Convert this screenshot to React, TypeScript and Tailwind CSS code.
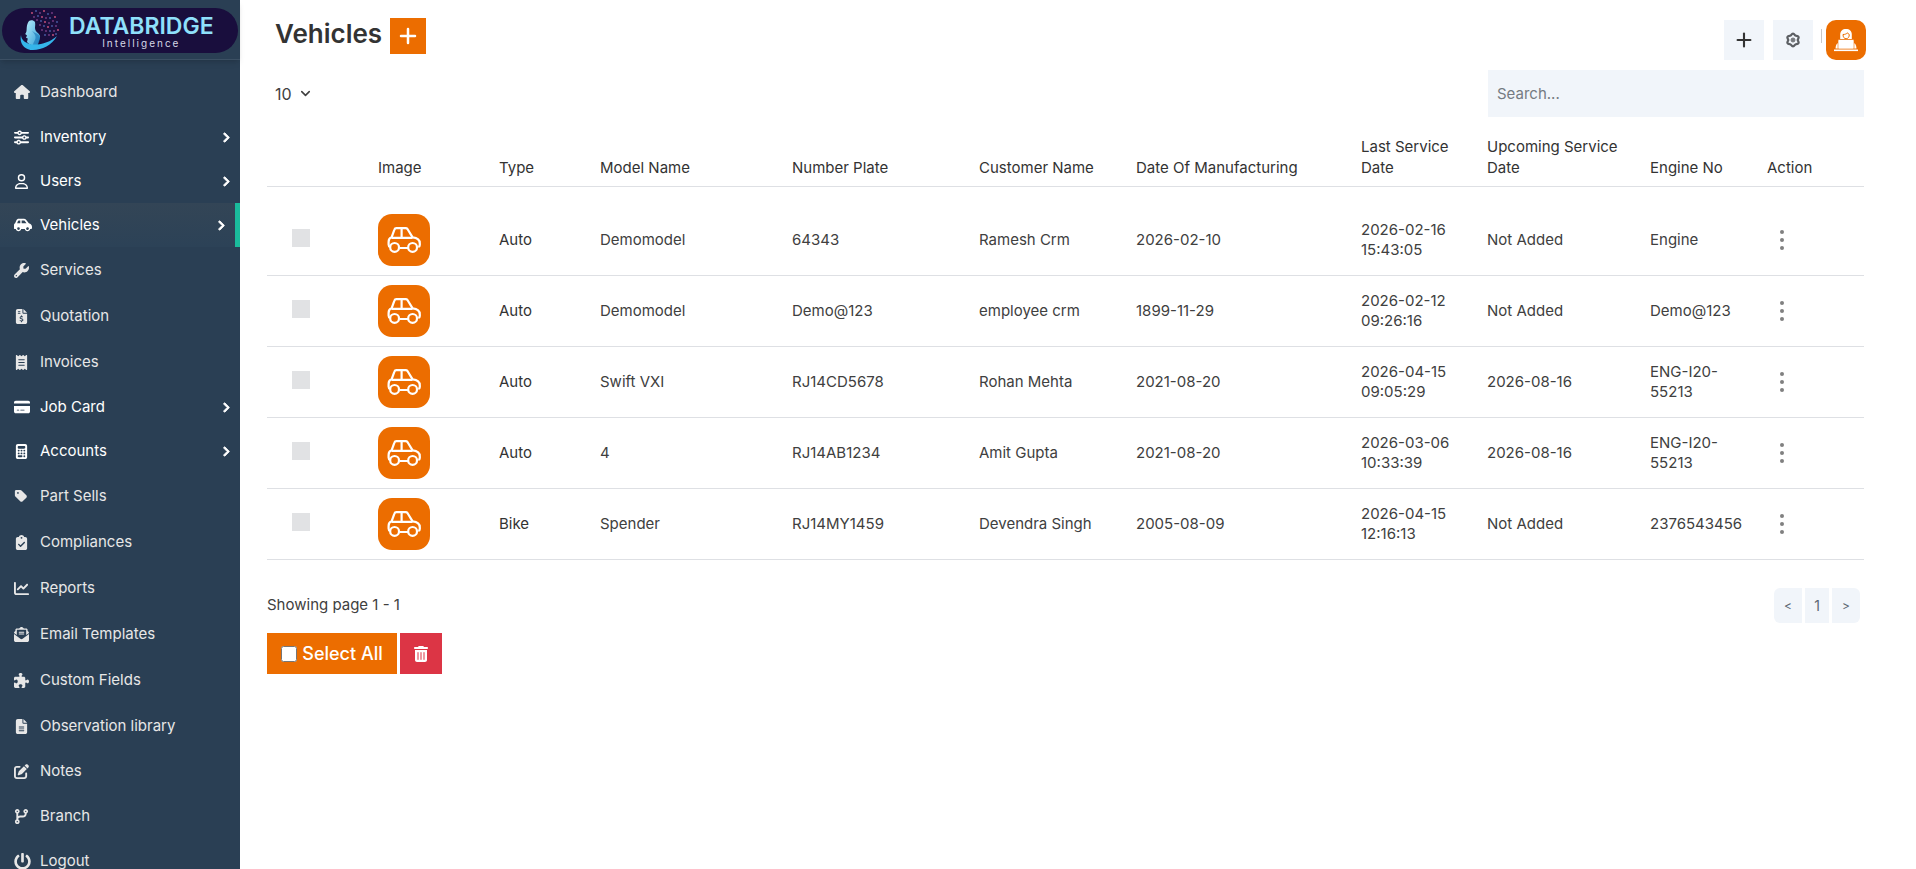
import type { ReactNode } from "react";
import {
  FaHouse, FaSliders, FaRegUser, FaCarSide, FaWrench, FaFileInvoiceDollar, FaReceipt, FaCreditCard,
  FaCalculator, FaTag, FaClipboardCheck, FaChartLine, FaEnvelopeOpenText, FaPuzzlePiece, FaFileLines,
  FaPenToSquare, FaCodeBranch, FaTrashCan,
} from "react-icons/fa6";
import { FaChevronRight, FaPowerOff } from "react-icons/fa";
import { ChevronDown, Plus } from "lucide-react";

type NavItem = { label: string; icon: ReactNode; sub?: boolean; active?: boolean };

const MAIN_NAV: NavItem[] = [
  { label: "Dashboard", icon: <FaHouse size={16} /> },
  { label: "Inventory", icon: <FaSliders size={15} />, sub: true },
  { label: "Users", icon: <FaRegUser size={15} />, sub: true },
  { label: "Vehicles", icon: <FaCarSide size={18} />, sub: true, active: true },
  { label: "Services", icon: <FaWrench size={15} /> },
  { label: "Quotation", icon: <FaFileInvoiceDollar size={15} /> },
  { label: "Invoices", icon: <FaReceipt size={15} /> },
  { label: "Job Card", icon: <FaCreditCard size={16} />, sub: true },
  { label: "Accounts", icon: <FaCalculator size={15} />, sub: true },
  { label: "Part Sells", icon: <FaTag size={14} /> },
  { label: "Compliances", icon: <FaClipboardCheck size={15} /> },
  { label: "Reports", icon: <FaChartLine size={15} /> },
  { label: "Email Templates", icon: <FaEnvelopeOpenText size={15} /> },
  { label: "Custom Fields", icon: <FaPuzzlePiece size={15} /> },
  { label: "Observation library", icon: <FaFileLines size={15} /> },
];

const MORE_NAV: NavItem[] = [
  { label: "Notes", icon: <FaPenToSquare size={15} /> },
  { label: "Branch", icon: <FaCodeBranch size={15} /> },
  { label: "Logout", icon: <FaPowerOff size={17} /> },
];

const COLUMNS = [
  { label: "", width: "w-[111px]" },
  { label: "Image", width: "w-[121px]" },
  { label: "Type", width: "w-[101px]" },
  { label: "Model Name", width: "w-[192px]" },
  { label: "Number Plate", width: "w-[187px]" },
  { label: "Customer Name", width: "w-[157px]" },
  { label: "Date Of Manufacturing", width: "w-[225px]" },
  { label: "Last Service Date", width: "w-[126px]" },
  { label: "Upcoming Service Date", width: "w-[163px]" },
  { label: "Engine No", width: "w-[117px]" },
  { label: "Action", width: "w-[97px]" },
];

const ROWS = [
  ["Auto", "Demomodel", "64343", "Ramesh Crm", "2026-02-10", "2026-02-16 15:43:05", "Not Added", "Engine"],
  ["Auto", "Demomodel", "Demo@123", "employee crm", "1899-11-29", "2026-02-12 09:26:16", "Not Added", "Demo@123"],
  ["Auto", "Swift VXI", "RJ14CD5678", "Rohan Mehta", "2021-08-20", "2026-04-15 09:05:29", "2026-08-16", "ENG-I20-55213"],
  ["Auto", "4", "RJ14AB1234", "Amit Gupta", "2021-08-20", "2026-03-06 10:33:39", "2026-08-16", "ENG-I20-55213"],
  ["Bike", "Spender", "RJ14MY1459", "Devendra Singh", "2005-08-09", "2026-04-15 12:16:13", "Not Added", "2376543456"],
];

const DOTS: [number, number, number][] = [
  [12, 3, 0], [16, 1, 1], [20, 3, 2], [24, 1, 0], [28, 4, 1], [32, 3, 2], [35, 7, 0], [14, 7, 2], [18, 6, 1],
  [22, 7, 0], [26, 8, 2], [30, 8, 1], [33, 11, 2], [37, 12, 1], [17, 10, 2], [21, 11, 1], [25, 12, 0],
  [29, 13, 2], [20, 15, 2], [24, 16, 1], [28, 17, 0], [32, 16, 1], [36, 16, 2], [38, 20, 0], [22, 20, 2],
  [26, 21, 2], [30, 21, 1], [34, 21, 2], [25, 25, 1], [29, 25, 2], [33, 25, 0], [36, 24, 1],
];
const DOT_FILLS = ["#d2557f", "#4a5fa8", "#7a3f86"];

function LogoMark() {
  return (
    <svg viewBox="0 0 40 42" className="h-[42px] w-10 shrink-0" aria-hidden="true">
      <defs>
        <linearGradient id="face" x1="0" y1="0" x2="1" y2="1">
          <stop offset="0" stopColor="#b9ecfb" />
          <stop offset="1" stopColor="#2f9fd6" />
        </linearGradient>
      </defs>
      {DOTS.map(([x, y, c]) => (
        <circle key={`${x}-${y}`} cx={x} cy={y} r={0.9} fill={DOT_FILLS[c]} />
      ))}
      <path
        d="M9 11c2-1.500 4.500-1 6 1 .8 3-.6 5.500.4 8 1.200 3 5.500 4 4.600 7.500-.6 2.500-2 5-2.500 8.500-4 .5-8-1-10.500-4l.8-3.500-1.800-.8 1-2.200-1.800-1.500c1.600-2 1.300-3.500 1.500-6 .2-2.500.8-5.500 2.300-7z"
        fill="url(#face)"
      />
      <path d="M12 21c2 2 4 4 3.500 7-.4 3-2.500 4-2.500 8l5 .5c0-4 2.500-6 2-9-.6-3-4-4-8-6.500z" fill="#1673b5" opacity=".6" />
      <path d="M1 25c0 5 5 9 12 9.500 9 .5 17-2.500 24-8.500-5 9-15 14-24 14C5 40-1 34 1 25z" fill="#35b5ea" />
    </svg>
  );
}

function CarIcon() {
  return (
    <svg viewBox="0 0 52 52" className="size-[52px]" fill="none" stroke="#fff" strokeWidth="2.200" strokeLinejoin="round" role="img" aria-label="Vehicle">
      <rect width="52" height="52" rx="14" fill="#ec6d00" stroke="none" />
      <path d="M12 33c-1-.6-1.400-1.300-1.400-2.500V28c0-2.500 1-4.200 3-4.700l2.800-7.700c.3-.9 1-1.400 2-1.400h9.200c.9 0 1.500.3 2 1l5 8.200c4.300.4 7.200 2.400 7.200 6v1.600c0 1-.5 1.700-1.500 2M21.500 34h8.500" />
      <path d="M13.500 23.800h21M23.600 14.500v9" />
      <circle cx="16.600" cy="33.400" r="4.400" />
      <circle cx="34.600" cy="33.400" r="4.400" />
    </svg>
  );
}

function AvatarIcon() {
  return (
    <svg viewBox="0 0 40 40" className="size-10" aria-hidden="true">
      <rect width="40" height="40" rx="10" fill="#ec6d00" />
      <path d="M14.200 19v-4.500C14.200 11 16.500 9 20 9s5.800 2 5.800 5.500V19z" fill="#fff" />
      <path d="M17 14.500c2 0 3.500-.6 4.500-1.700.4.900 1 1.400 1.800 1.700 0 2.500-1.200 4.200-3.200 4.200S17 17 17 14.500z" fill="#fff" stroke="#ec6d00" />
      <path d="M12 23c-1.500.7-2.200 2.200-2.500 5.500h21c-.3-3.300-1-4.800-2.500-5.500z" fill="#fff" />
      <rect x="12" y="19.500" width="16" height="9.500" rx="1" fill="#fff" stroke="#ec6d00" strokeWidth=".6" />
      <rect x="8" y="29.500" width="24" height="1.600" fill="#fff" />
    </svg>
  );
}

function GearIcon() {
  return (
    <svg viewBox="0 0 16 16" className="size-4" fill="none" stroke="#5c5f63" aria-hidden="true">
      <path
        d="M8 1.700C9.500 1.700 9.600 3.100 10.500 3.600S12.700 3.500 13.500 4.800 12.700 7 12.700 8s1.600 1.900.8 3.200-2.100.7-3 1.200-1 1.900-2.500 1.900-1.600-1.400-2.500-1.900-2.200.1-3-1.200S3.300 9 3.300 8 1.700 6.100 2.500 4.800s2.100-.7 3-1.200S6.500 1.700 8 1.700z"
        strokeWidth="2.200"
        strokeLinejoin="round"
      />
      <circle cx="8" cy="8" r="2" fill="#77797d" stroke="#77797d" />
    </svg>
  );
}

function NavList({ items, rowClass }: { items: NavItem[]; rowClass: string }) {
  return (
    <ul>
      {items.map((item) => (
        <li key={item.label}>
          <a
            href="#"
            className={
              item.active
                ? "flex h-11 items-center border-r-[5px] border-[#1abb9c] bg-linear-to-b from-[#334556] to-[#2c4257] pr-2 pl-[14px] text-white"
                : item.sub
                  ? "flex h-11 items-center pr-2 pl-[14px] text-white"
                  : `flex items-center px-[14px] text-[#e7e7e7] ${rowClass}`
            }
          >
            <span className="flex w-[26px] shrink-0">{item.icon}</span>
            <span className="grow">{item.label}</span>
            {item.sub && <FaChevronRight size={11} stroke="currentColor" strokeWidth={40} />}
          </a>
        </li>
      ))}
    </ul>
  );
}

export default function App() {
  return (
    <div className="flex min-h-screen bg-white font-['Inter',sans-serif] text-[15px] text-[#404040]">
      <aside className="sticky top-0 flex h-screen w-60 shrink-0 flex-col bg-[#2a3f54]">
        <div className="h-[60px] shrink-0 border-b border-[#3c5064] px-[2px] pt-2 shadow-md">
          <div className="flex h-[45px] items-center rounded-full bg-[#190e3d] pl-[18px]">
            <LogoMark />
            <div className="ml-[9px] flex flex-col items-center pt-[2px]">
              <span className="text-[23px] leading-[22px] font-semibold text-[#8fe0fb]">DATABRIDGE</span>
              <span className="text-[10px] leading-3 tracking-[2px] text-[#d5d7e6]">Intelligence</span>
            </div>
          </div>
        </div>
        <nav className="min-h-0 grow overflow-y-auto pt-[9px] [scrollbar-width:none]" aria-label="Main">
          <NavList items={MAIN_NAV} rowClass="h-[46px]" />
          <NavList items={MORE_NAV} rowClass="h-[45px]" />
        </nav>
      </aside>

      <main className="min-w-0 grow pr-[52px] pl-[27px]">
        <header className="flex h-[70px] items-start justify-between pl-2">
          <div className="flex items-start gap-2 pt-[18px]">
            <h1 className="text-[26px] leading-8 font-semibold text-[#333]">Vehicles</h1>
            <button type="button" aria-label="Add vehicle" className="flex size-9 items-center justify-center bg-[#ec6d00] text-white">
              <Plus size={24} strokeWidth={2.5} />
            </button>
          </div>
          <div className="-mr-[2px] flex pt-5">
            <button type="button" aria-label="Quick add" className="flex size-10 items-center justify-center bg-[#f1f5fa] text-[#333]">
              <Plus size={22} strokeWidth={2.3} />
            </button>
            <button type="button" aria-label="Settings" className="ml-[9px] flex size-10 items-center justify-center bg-[#f1f5fa]">
              <GearIcon />
            </button>
            <span className="mt-[9px] ml-2 h-[14px] w-px bg-[#c8c8c8]" />
            <button type="button" aria-label="Account" className="ml-1">
              <AvatarIcon />
            </button>
          </div>
        </header>

        <div className="flex items-center justify-between">
          <label className="grid items-center pl-2 text-base">
            <select aria-label="Rows per page" defaultValue="10" className="col-start-1 row-start-1 w-[38px] appearance-none bg-transparent">
              <option>10</option>
              <option>25</option>
              <option>50</option>
            </select>
            <ChevronDown size={15} strokeWidth={2.5} className="pointer-events-none col-start-1 row-start-1 justify-self-end" />
          </label>
          <input
            type="search"
            aria-label="Search"
            placeholder="Search..."
            className="h-[47px] w-[376px] bg-[#f1f5fa] px-[9px] placeholder:text-[#757b82]"
          />
        </div>

        <table className="mt-[19px] w-full table-fixed border-collapse text-left">
          <thead>
            <tr className="border-b border-[#dee0e4]">
              {COLUMNS.map((c) => (
                <th key={c.label} scope="col" className={`${c.width} pb-2 align-bottom leading-[21px] font-normal text-[#333]`}>
                  <span className={c.label.endsWith("Service Date") ? "block pr-5" : "block whitespace-nowrap"}>{c.label}</span>
                </th>
              ))}
            </tr>
          </thead>
          <tbody>
            <tr aria-hidden="true"><td colSpan={11} className="h-[18px]" /></tr>
            {ROWS.map((row, i) => (
              <tr key={i} className="h-[71px] border-b border-[#dee0e4]">
                <td className="pb-1 pl-[25px]">
                  <input type="checkbox" aria-label={`Select vehicle ${row[2]}`} className="block size-[18px] appearance-none bg-[#e1e2e4]" />
                </td>
                <td><CarIcon /></td>
                {row.map((cell, j) => (
                  <td key={j} className={j === 0 ? "leading-5 text-[#333]" : "pr-5 leading-5"}>{cell}</td>
                ))}
                <td className="pl-[9px]">
                  <button type="button" aria-label="Row actions" className="flex h-8 w-3 flex-col items-center justify-center gap-1">
                    <span className="size-1 rounded-full bg-[#808080]" />
                    <span className="size-1 rounded-full bg-[#808080]" />
                    <span className="size-1 rounded-full bg-[#808080]" />
                  </button>
                </td>
              </tr>
            ))}
          </tbody>
        </table>

        <div className="mt-7 flex items-center justify-between">
          <p>Showing page 1 - 1</p>
          <div className="mr-1 flex gap-[3px] text-sm text-[#5c6772]">
            <button type="button" aria-label="Previous page" className="h-[35px] w-7 rounded-l-md bg-[#f1f5fa] text-xs">&lt;</button>
            <button type="button" className="h-[35px] w-6 bg-[#f1f5fa]">1</button>
            <button type="button" aria-label="Next page" className="h-[35px] w-7 rounded-r-md bg-[#f1f5fa] text-xs">&gt;</button>
          </div>
        </div>

        <div className="mt-[10px] flex gap-[3px]">
          <label className="flex h-[41px] w-[130px] items-center justify-center gap-[5px] bg-[#ec6d00] text-lg font-medium whitespace-nowrap text-white">
            <input type="checkbox" className="size-4" />
            Select All
          </label>
          <button type="button" aria-label="Delete selected" className="flex h-[41px] w-[42px] items-center justify-center bg-[#dc3545] text-white">
            <FaTrashCan size={16} />
          </button>
        </div>
      </main>
    </div>
  );
}
